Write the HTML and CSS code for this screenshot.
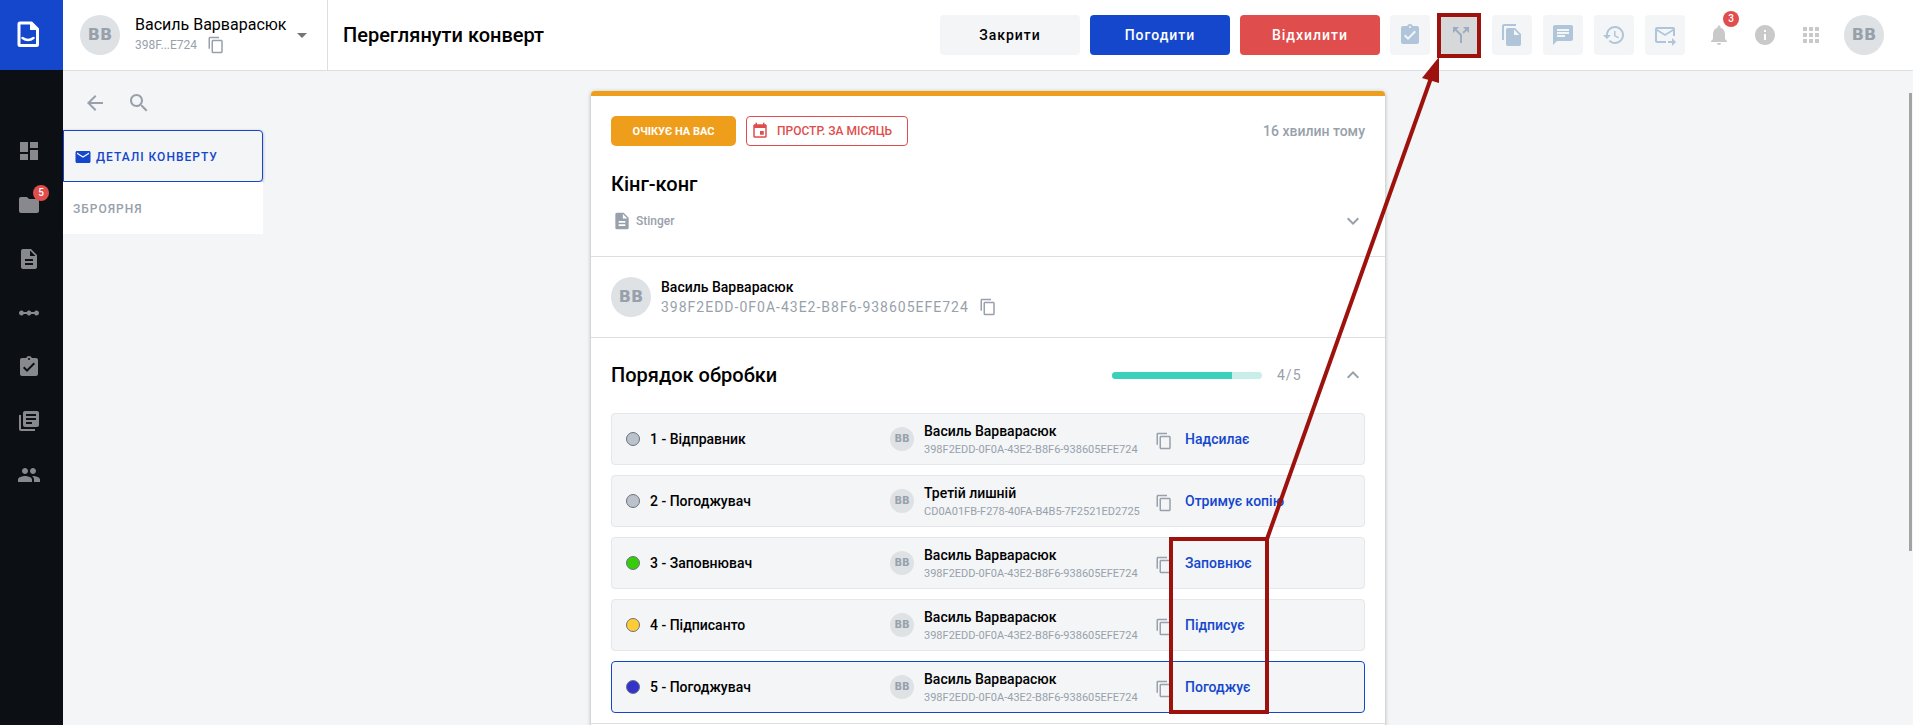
FILE: index.html
```
<!DOCTYPE html>
<html lang="uk">
<head>
<meta charset="utf-8">
<title>Переглянути конверт</title>
<link rel="stylesheet" href="styles.css">
</head>
<body>
<svg class="defs" aria-hidden="true">
  <symbol id="copy" viewBox="0 0 24 24"><path d="M16 1H4c-1.100 0-2 .9-2 2v14h2V3h12V1zm3 4H8c-1.100 0-2 .9-2 2v14c0 1.100.9 2 2 2h11c1.100 0 2-.9 2-2V7c0-1.100-.9-2-2-2zm0 16H8V7h11v14z"/></symbol>
  <symbol id="doc" viewBox="0 0 24 24"><path d="M14 2H6c-1.100 0-2 .9-2 2v16c0 1.100.9 2 2 2h12c1.100 0 2-.9 2-2V8l-6-6zm2 16H8v-2h8v2zm0-4H8v-2h8v2zm-3-5V3.500L18.500 9H13z"/></symbol>
  <symbol id="task" viewBox="0 0 24 24"><path d="M19 3h-4.180C14.400 1.840 13.300 1 12 1s-2.400.84-2.820 2H5c-1.100 0-2 .9-2 2v14c0 1.100.9 2 2 2h14c1.100 0 2-.9 2-2V5c0-1.100-.9-2-2-2zm-7 0c.55 0 1 .45 1 1s-.45 1-1 1-1-.45-1-1 .45-1 1-1zm-2 14l-4-4 1.410-1.410L10 14.170l6.590-6.590L18 9l-8 8z"/></symbol>
  <symbol id="chevron" viewBox="0 0 24 24"><path d="M7.410 8.590L12 13.170l4.590-4.580L18 10l-6 6-6-6z"/></symbol>
</svg>
<div class="app">
  <nav class="sidebar" aria-label="Меню">
    <a class="logo" href="#" aria-label="Головна">
      <svg width="24" height="30" viewBox="0 0 24 30"><path d="M4 3h11.500l6 6v15.500a1 1 0 0 1-1 1H4a1 1 0 0 1-1-1V4a1 1 0 0 1 1-1z" fill="none" stroke="#fff" stroke-width="3" stroke-linejoin="round"/><path d="M14 2v8h8z" fill="#fff"/><path d="M6.500 18q5.500 4 11 0" fill="none" stroke="#fff" stroke-width="2.500" stroke-linecap="round"/></svg>
    </a>
    <div class="side-links">
      <a href="#" aria-label="Панель"><svg class="i24" viewBox="0 0 24 24"><path d="M3 13h8V3H3v10zm0 8h8v-6H3v6zm10 0h8V11h-8v10zm0-18v6h8V3h-8z"/></svg></a>
      <a href="#" aria-label="Конверти"><svg class="i24" viewBox="0 0 24 24"><path d="M10 4H4c-1.100 0-2 .9-2 2v12c0 1.100.9 2 2 2h16c1.100 0 2-.9 2-2V8c0-1.100-.9-2-2-2h-8l-2-2z"/></svg><span class="badge">5</span></a>
      <a href="#" aria-label="Документи"><svg class="i24"><use href="#doc"/></svg></a>
      <a href="#" aria-label="Процеси"><svg class="i24" viewBox="0 0 24 24"><path d="M19.500 9.500c-1.030 0-1.900.62-2.290 1.500h-2.920c-.39-.88-1.260-1.500-2.290-1.500s-1.900.62-2.290 1.500H6.790c-.39-.88-1.260-1.500-2.290-1.500C3.120 9.500 2 10.620 2 12s1.120 2.500 2.500 2.500c1.030 0 1.900-.62 2.290-1.500h2.920c.39.88 1.260 1.500 2.290 1.500s1.900-.62 2.290-1.500h2.920c.39.88 1.260 1.500 2.290 1.500 1.380 0 2.500-1.120 2.500-2.500s-1.120-2.500-2.500-2.500z"/></svg></a>
      <a href="#" aria-label="Завдання"><svg class="i24"><use href="#task"/></svg></a>
      <a href="#" aria-label="Бібліотека"><svg class="i24" viewBox="0 0 24 24"><path d="M4 6H2v14c0 1.100.9 2 2 2h14v-2H4V6zm16-4H8c-1.100 0-2 .9-2 2v12c0 1.100.9 2 2 2h12c1.100 0 2-.9 2-2V4c0-1.100-.9-2-2-2zm-1 9H9V9h10v2zm-4 4H9v-2h6v2zm4-8H9V5h10v2z"/></svg></a>
      <a href="#" aria-label="Користувачі"><svg class="i24" viewBox="0 0 24 24"><path d="M16 11c1.660 0 2.990-1.340 2.990-3S17.660 5 16 5s-3 1.340-3 3 1.340 3 3 3zm-8 0c1.660 0 2.990-1.340 2.990-3S9.660 5 8 5 5 6.340 5 8s1.340 3 3 3zm0 2c-2.330 0-7 1.170-7 3.500V19h14v-2.500c0-2.330-4.670-3.500-7-3.500zm8 0c-.29 0-.62.020-.97.050 1.160.84 1.970 1.970 1.970 3.450V19h6v-2.500c0-2.330-4.670-3.500-7-3.500z"/></svg></a>
    </div>
  </nav>
  <div class="page">
    <header class="header">
      <div class="account">
        <span class="avatar">ВВ</span>
        <div class="who">
          <span class="who-name">Василь Варварасюк</span>
          <span class="who-id">398F...E724 <button class="plain" aria-label="Копіювати"><svg class="i18"><use href="#copy"/></svg></button></span>
        </div>
        <button class="plain caret" aria-label="Змінити обліковий запис"><svg class="i24" viewBox="0 0 24 24"><path d="M7 10l5 5 5-5z"/></svg></button>
      </div>
      <h1>Переглянути конверт</h1>
      <div class="actions">
        <button class="btn">Закрити</button>
        <button class="btn blue">Погодити</button>
        <button class="btn red">Відхилити</button>
        <div class="tools">
          <button class="tool" aria-label="Завдання"><svg class="i24"><use href="#task"/></svg></button>
          <button class="tool active" aria-label="Делегувати"><svg class="i24" viewBox="0 0 24 24"><path d="M14 4l2.290 2.290-2.880 2.880 1.420 1.420 2.880-2.880L20 10V4zm-4 0H4v6l2.290-2.290 4.710 4.700V20h2v-8.410l-5.290-5.300z"/></svg></button>
          <button class="tool" aria-label="Дублювати"><svg class="i24" viewBox="0 0 24 24"><path d="M16 1H4c-1.100 0-2 .9-2 2v14h2V3h12V1zm-1 4l6 6v10c0 1.100-.9 2-2 2H7.990C6.890 23 6 22.100 6 21l.01-14c0-1.100.89-2 1.990-2h7zm-1 7h5.500L14 6.500V12z"/></svg></button>
          <button class="tool" aria-label="Коментарі"><svg class="i24" viewBox="0 0 24 24"><path d="M20 2H4c-1.100 0-1.990.9-1.990 2L2 22l4-4h14c1.100 0 2-.9 2-2V4c0-1.100-.9-2-2-2zm-6 12H6v-2h8v2zm4-3H6V9h12v2zm0-3H6V6h12v2z"/></svg></button>
          <button class="tool" aria-label="Історія"><svg class="i24" viewBox="0 0 24 24"><path d="M13 3c-4.970 0-9 4.030-9 9H1l3.890 3.890.07.14L9 12H6c0-3.870 3.130-7 7-7s7 3.130 7 7-3.130 7-7 7c-1.930 0-3.680-.79-4.940-2.060l-1.420 1.420C8.270 19.990 10.510 21 13 21c4.970 0 9-4.030 9-9s-4.030-9-9-9zm-1 5v5l4.280 2.540.72-1.210-3.500-2.080V8H12z"/></svg></button>
          <button class="tool" aria-label="Переслати"><svg class="i24" viewBox="0 0 24 24"><path d="M20 4H4c-1.100 0-1.990.9-1.990 2L2 18c0 1.100.9 2 2 2h9v-2H4V8l8 5 8-5v5h2V6c0-1.100-.9-2-2-2zm-8 7L4 6h16l-8 5zm7 4l4 4-4 4v-3h-4v-2h4v-3z"/></svg></button>
        </div>
        <div class="status">
          <button class="plain" aria-label="Сповіщення"><svg class="i24" viewBox="0 0 24 24"><path d="M12 22c1.100 0 2-.9 2-2h-4c0 1.100.89 2 2 2zm6-6v-5c0-3.070-1.640-5.640-4.500-6.320V4c0-.83-.67-1.500-1.500-1.500s-1.500.67-1.500 1.500v.68C7.630 5.360 6 7.920 6 11v5l-2 2v1h16v-1l-2-2z"/></svg><span class="badge">3</span></button>
          <button class="plain" aria-label="Довідка"><svg class="i24" viewBox="0 0 24 24"><path d="M12 2C6.480 2 2 6.480 2 12s4.480 10 10 10 10-4.480 10-10S17.520 2 12 2zm1 15h-2v-6h2v6zm0-8h-2V7h2v2z"/></svg></button>
          <button class="plain" aria-label="Застосунки"><svg class="i24" viewBox="0 0 24 24"><path d="M4 8h4V4H4v4zm6 12h4v-4h-4v4zm-6 0h4v-4H4v4zm0-6h4v-4H4v4zm6 0h4v-4h-4v4zm6-10v4h4V4h-4zm-6 4h4V4h-4v4zm6 6h4v-4h-4v4zm0 6h4v-4h-4v4z"/></svg></button>
        </div>
        <span class="avatar">ВВ</span>
      </div>
    </header>
    <div class="body">
      <aside class="panel">
        <div class="panel-tools">
          <button class="plain" aria-label="Назад"><svg class="i24" viewBox="0 0 24 24"><path d="M20 11H7.830l5.590-5.590L12 4l-8 8 8 8 1.410-1.410L7.830 13H20v-2z"/></svg></button>
          <button class="plain" aria-label="Пошук"><svg class="i24" viewBox="0 0 24 24"><path d="M15.500 14h-.79l-.28-.27C15.410 12.590 16 11.110 16 9.500 16 5.910 13.090 3 9.500 3S3 5.910 3 9.500 5.910 16 9.500 16c1.610 0 3.090-.59 4.230-1.570l.27.28v.79l5 4.990L20.490 19l-4.990-5zm-6 0C7.010 14 5 11.990 5 9.500S7.010 5 9.500 5 14 7.010 14 9.500 11.990 14 9.500 14z"/></svg></button>
        </div>
        <a class="tab current" href="#"><svg class="i18" viewBox="0 0 24 24"><path d="M20 4H4c-1.100 0-1.990.9-1.990 2L2 18c0 1.100.9 2 2 2h16c1.100 0 2-.9 2-2V6c0-1.100-.9-2-2-2zm0 4l-8 5-8-5V6l8 5 8-5v2z"/></svg>ДЕТАЛІ КОНВЕРТУ</a>
        <a class="tab" href="#">ЗБРОЯРНЯ</a>
      </aside>
      <main class="card">
        <section class="summary">
          <div class="tags">
            <span class="tag wait">ОЧІКУЄ НА ВАС</span>
            <span class="tag due"><svg class="i18" viewBox="0 0 24 24"><path d="M17 12h-5v5h5v-5zM16 1v2H8V1H6v2H5c-1.110 0-1.990.9-1.990 2L3 19c0 1.100.89 2 2 2h14c1.100 0 2-.9 2-2V5c0-1.100-.9-2-2-2h-1V1h-2zm3 18H5V8h14v11z"/></svg>ПРОСТР. ЗА МІСЯЦЬ</span>
            <span class="ago">16 хвилин тому</span>
          </div>
          <h2>Кінг-конг</h2>
          <div class="file"><svg class="i20"><use href="#doc"/></svg><span>Stinger</span><button class="plain toggle" aria-label="Розгорнути"><svg class="i24"><use href="#chevron"/></svg></button></div>
        </section>
        <section class="sender">
          <span class="avatar">ВВ</span>
          <div>
            <div class="sender-name">Василь Варварасюк</div>
            <div class="sender-id">398F2EDD-0F0A-43E2-B8F6-938605EFE724 <button class="plain" aria-label="Копіювати"><svg class="i18"><use href="#copy"/></svg></button></div>
          </div>
        </section>
        <section class="flow">
          <div class="flow-head">
            <h2>Порядок обробки</h2>
            <div class="bar"><div class="fill" style="width:80%"></div></div>
            <span class="count">4/5</span>
            <button class="plain toggle up" aria-label="Згорнути"><svg class="i24"><use href="#chevron"/></svg></button>
          </div>
          <ol class="steps">
            <li class="step"><span class="dot"></span><span class="role">1 - Відправник</span><span class="avatar small">ВВ</span><div class="person"><b>Василь Варварасюк</b><small>398F2EDD-0F0A-43E2-B8F6-938605EFE724</small></div><button class="plain" aria-label="Копіювати"><svg class="i18"><use href="#copy"/></svg></button><span class="act">Надсилає</span></li>
            <li class="step"><span class="dot"></span><span class="role">2 - Погоджувач</span><span class="avatar small">ВВ</span><div class="person"><b>Третій лишній</b><small>CD0A01FB-F278-40FA-B4B5-7F2521ED2725</small></div><button class="plain" aria-label="Копіювати"><svg class="i18"><use href="#copy"/></svg></button><span class="act">Отримує копію</span></li>
            <li class="step"><span class="dot green"></span><span class="role">3 - Заповнювач</span><span class="avatar small">ВВ</span><div class="person"><b>Василь Варварасюк</b><small>398F2EDD-0F0A-43E2-B8F6-938605EFE724</small></div><button class="plain" aria-label="Копіювати"><svg class="i18"><use href="#copy"/></svg></button><span class="act">Заповнює</span></li>
            <li class="step"><span class="dot yellow"></span><span class="role">4 - Підписанто</span><span class="avatar small">ВВ</span><div class="person"><b>Василь Варварасюк</b><small>398F2EDD-0F0A-43E2-B8F6-938605EFE724</small></div><button class="plain" aria-label="Копіювати"><svg class="i18"><use href="#copy"/></svg></button><span class="act">Підписує</span></li>
            <li class="step now"><span class="dot indigo"></span><span class="role">5 - Погоджувач</span><span class="avatar small">ВВ</span><div class="person"><b>Василь Варварасюк</b><small>398F2EDD-0F0A-43E2-B8F6-938605EFE724</small></div><button class="plain" aria-label="Копіювати"><svg class="i18"><use href="#copy"/></svg></button><span class="act">Погоджує</span></li>
          </ol>
        </section>
        <section class="rest"></section>
      </main>
      <div class="scroll-thumb"></div>
    </div>
  </div>
</div>
<svg class="notes" width="1913" height="725" viewBox="0 0 1913 725" aria-hidden="true"><g fill="none" stroke="#9e120e" stroke-width="4"><rect x="1439" y="15" width="40" height="41"/><rect x="1171" y="539" width="96" height="173"/><path d="M1267 539L1431 78"/></g><path d="M1439 57v26l-17-5z" fill="#9e120e"/></svg>
</body>
</html>
```
FILE: styles.css
```
* { box-sizing: border-box; }
body { margin: 0; font-family: Roboto, "Liberation Sans", sans-serif; font-size: 14px; color: #0b0d12; background: #f3f5f7; }
h1, h2 { margin: 0; font-size: 20px; line-height: 24px; font-weight: 500; color: #000; }
a { text-decoration: none; color: inherit; }
svg { display: block; flex: none; fill: currentColor; }
.defs { position: absolute; width: 0; height: 0; }
.i24 { width: 24px; height: 24px; }
.i20 { width: 20px; height: 20px; }
.i18 { width: 18px; height: 18px; }
button { font: inherit; border: 0; margin: 0; cursor: pointer; }
.plain { position: relative; flex: none; padding: 0; background: none; color: inherit; }

.app { display: flex; height: 100vh; overflow: hidden; }
.sidebar { flex: none; width: 63px; background: #0c1014; color: #88898c; }
.logo { display: flex; align-items: center; height: 70px; padding-left: 16px; background: #1547cd; }
.side-links { display: flex; flex-direction: column; gap: 30px; padding: 69px 0 0 17px; }
.side-links a { position: relative; width: 24px; height: 24px; }
.badge { position: absolute; top: -12px; right: -8px; width: 16px; height: 16px; border-radius: 50%; background: #df4d4d; color: #fff; font-size: 10px; line-height: 16px; font-weight: 500; text-align: center; }
.side-links .badge { top: -8px; }

.page { flex: 1; min-width: 0; display: flex; flex-direction: column; }
.header { flex: none; display: flex; align-items: center; height: 71px; background: #fff; border-bottom: 1px solid #dcdfe2; }
.account { display: flex; align-items: center; align-self: stretch; width: 265px; padding-left: 17px; border-right: 1px solid #dcdfe2; }
.avatar { flex: none; width: 40px; height: 40px; border-radius: 50%; background: #dee2e5; color: #98a1ab; font-family: "DejaVu Sans", sans-serif; font-size: 16px; line-height: 40px; font-weight: 700; text-align: center; }
.avatar.small { width: 24px; height: 24px; font-size: 10px; line-height: 24px; }
.who { flex: 1; padding-left: 15px; }
.who-name { display: block; font-size: 16px; line-height: 20px; color: #000; white-space: nowrap; }
.who-id { display: flex; align-items: center; gap: 10px; height: 20px; font-size: 12px; color: #98a1ab; }
.caret { margin-right: 13px; color: #757575; }
h1 { margin-left: 15px; }
.actions { display: flex; align-items: center; gap: 10px; margin-left: auto; padding-right: 29px; }
.btn { width: 140px; height: 40px; border-radius: 4px; background: #f3f5f7; color: #000; font-weight: 500; letter-spacing: 1px; }
.blue { background: #1547cd; color: #fff; }
.red { background: #df4d4d; color: #fff; }
.tools { display: flex; gap: 11px; }
.tool { display: flex; align-items: center; justify-content: center; width: 40px; height: 40px; padding: 0; border-radius: 4px; background: #f3f5f7; color: #b0c4da; }
.tool.active { background: #d6d8da; color: #9cadc0; }
.status { display: flex; gap: 22px; padding: 0 11px 0 12px; color: #c9c9c9; }

.body { position: relative; flex: 1; min-height: 0; display: grid; grid-template-columns: 1fr 794px 1fr; }
.panel { width: 200px; padding-top: 20px; color: #98a1ab; }
.panel-tools { display: flex; align-items: flex-start; gap: 20px; height: 39px; padding-left: 20px; }
.tab { display: flex; align-items: center; height: 52px; padding: 2px 10px 0; background: #fff; font-size: 12px; font-weight: 500; letter-spacing: 1px; }
.current { gap: 4px; background: #f3f5f7; color: #1547cd; border: 1px solid #1547cd; border-radius: 0 4px 4px 0; box-shadow: 0 1px 3px rgba(0, 0, 0, .35); }

.card { align-self: start; margin-top: 20px; border-top: 5px solid #ef9e1b; border-radius: 4px; background: #fff; box-shadow: 0 1px 4px rgba(0, 0, 0, .3); }
.summary { padding: 20px 20px 0; height: 161px; border-bottom: 1px solid #dcdfe2; }
.tags { display: flex; gap: 10px; align-items: center; }
.tag { display: flex; align-items: center; height: 30px; border-radius: 4px; }
.wait { justify-content: center; width: 125px; border-radius: 5px; background: #ef9e1b; color: #fff; font-size: 11px; font-weight: 700; }
.due { gap: 8px; width: 162px; padding-left: 4px; border: 1px solid #df4d4d; color: #df4d4d; font-size: 12px; font-weight: 500; }
.ago { margin-left: auto; color: #98a1ab; font-weight: 500; }
.summary h2 { margin-top: 26px; }
.file { display: flex; align-items: center; gap: 4px; height: 24px; margin-top: 13px; padding-left: 1px; color: #98a1ab; font-size: 12px; font-weight: 500; }
.toggle { margin-left: auto; }
.up svg { transform: rotate(180deg); }
.sender { display: flex; align-items: center; gap: 10px; height: 81px; padding: 0 20px; border-bottom: 1px solid #dcdfe2; }
.sender-name { font-weight: 500; line-height: 20px; color: #000; }
.sender-id { display: flex; align-items: center; gap: 10px; height: 20px; letter-spacing: 1px; color: #98a1ab; }
.flow { padding: 25px 20px 10px; border-bottom: 1px solid #dcdfe2; }
.flow-head { display: flex; align-items: center; height: 24px; color: #98a1ab; }
.bar { width: 150px; height: 7px; margin-left: auto; border-radius: 4px; background: #c9eee9; overflow: hidden; }
.fill { height: 100%; background: #3ad0bb; }
.count { width: 79px; padding-left: 15px; letter-spacing: 1px; }
.flow-head .toggle { margin: 0; }
.steps { display: flex; flex-direction: column; gap: 10px; margin: 26px 0 0; padding: 0; list-style: none; color: #98a1ab; }
.step { display: grid; grid-template-columns: 14px 230px 24px 221px 20px 1fr; column-gap: 10px; align-items: center; height: 52px; padding-left: 14px; border: 1px solid #e4e7eb; border-radius: 4px; background: #f3f5f7; }
.step .plain { padding-top: 4px; }
.now { border-color: #1547cd; }
.dot { width: 14px; height: 14px; border: 1px solid #6b7280; border-radius: 50%; background: #bcc2cc; }
.green { background: #36cc0a; }
.yellow { background: #ffcc33; }
.indigo { background: #3333cc; }
.role, .act, .person b { font-size: 14px; font-weight: 500; }
.role, .person b { color: #000; }
.person { padding-top: 4px; }
.person b, .person small { display: block; line-height: 18px; }
.person small { font-size: 11px; line-height: 20px; }
.act { color: #1547cd; }
.rest { height: 160px; }
.scroll-thumb { position: absolute; top: 22px; right: 1px; width: 3px; height: 458px; background: #a3a3a3; }
.notes { position: absolute; top: 0; left: 0; pointer-events: none; }
```
